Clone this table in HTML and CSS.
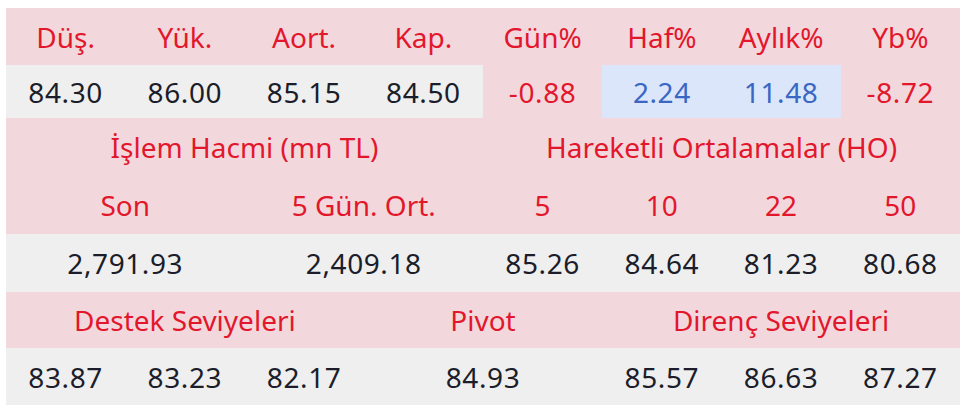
FILE: index.html
```html
<!DOCTYPE html>
<html lang="tr">
<head>
<meta charset="utf-8">
<link rel="stylesheet" href="styles.css">
</head>
<body>
<table class="stats">
  <colgroup>
    <col class="c"><col class="c"><col class="c"><col class="c"><col class="c"><col class="c"><col class="c"><col class="c">
  </colgroup>
  <tr class="head r1">
    <td>Düş.</td><td>Yük.</td><td>Aort.</td><td>Kap.</td><td>Gün%</td><td>Haf%</td><td>Aylık%</td><td>Yb%</td>
  </tr>
  <tr class="vals r2">
    <td>84.30</td><td>86.00</td><td>85.15</td><td>84.50</td>
    <td class="neg">-0.88</td><td class="pos">2.24</td><td class="pos">11.48</td><td class="neg">-8.72</td>
  </tr>
  <tr class="head r3">
    <td colspan="4">İşlem Hacmi (mn TL)</td><td colspan="4">Hareketli Ortalamalar (HO)</td>
  </tr>
  <tr class="head r4">
    <td colspan="2">Son</td><td colspan="2">5 Gün. Ort.</td><td>5</td><td>10</td><td>22</td><td>50</td>
  </tr>
  <tr class="vals r5">
    <td colspan="2">2,791.93</td><td colspan="2">2,409.18</td><td>85.26</td><td>84.64</td><td>81.23</td><td>80.68</td>
  </tr>
  <tr class="head r6">
    <td colspan="3">Destek Seviyeleri</td><td colspan="2">Pivot</td><td colspan="3">Direnç Seviyeleri</td>
  </tr>
  <tr class="vals r7">
    <td>83.87</td><td>83.23</td><td>82.17</td><td colspan="2">84.93</td><td>85.57</td><td>86.63</td><td>87.27</td>
  </tr>
</table>
</body>
</html>
```

FILE: styles.css
```css
html, body {
  background: #ffffff;
}
body {
  margin: 8px 0 0 6px;
  font-family: "Noto Sans", "Open Sans", sans-serif;
}
.stats {
  border-collapse: collapse;
  table-layout: fixed;
  width: 954px;
}
.stats .c {
  width: 119.25px;
}
.stats td {
  padding: 0;
  text-align: center;
  vertical-align: middle;
  font-size: 28px;
  line-height: 32px;
  white-space: nowrap;
}
.head td {
  background: #f2d8dc;
  color: #e3172c;
}
.vals td {
  background: #efefef;
  color: #1b1d2a;
  letter-spacing: 0.6px;
}
.vals td.neg {
  background: #f2d8dc;
  color: #e3172c;
}
.vals td.pos {
  background: #dbe6fb;
  color: #3a66c4;
}
.r1 td { height: 57px; }
.r2 td { height: 53px; }
.r3 td { height: 58px; }
.r4 td { height: 58px; }
.r5 td { height: 58px; }
.r6 td { height: 56px; }
.r7 td { height: 57px; }
```
